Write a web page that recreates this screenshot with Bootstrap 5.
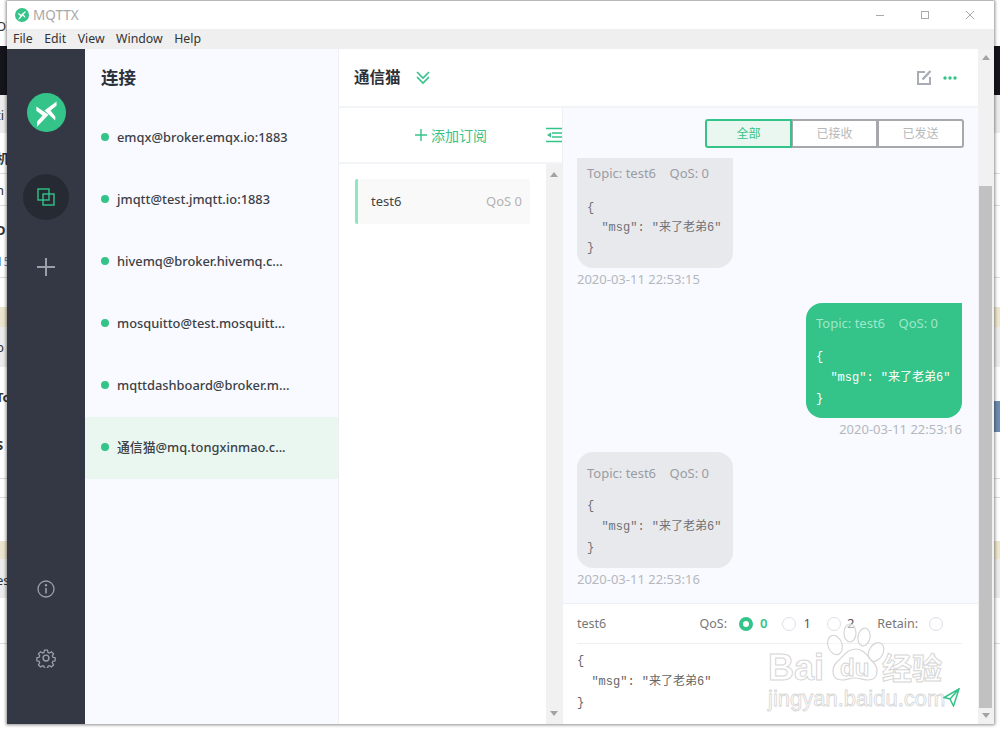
<!doctype html>
<html lang="zh">
<head>
<meta charset="utf-8">
<link href="https://cdn.jsdelivr.net/npm/bootstrap@5.3.0/dist/css/bootstrap.min.css" rel="stylesheet">
<style>
html,body{height:731px;overflow:hidden}
body{background:#fff;font-family:"Noto Sans","Noto Sans CJK SC",sans-serif;position:relative}
.backdrop{position:absolute;inset:0;background:#fff;color:#333;font-size:13px}
.strip{position:absolute;left:0;right:0}
.s-dark{top:46px;height:49px;background:#14141c}
.s-gray{background:#ececec}
.s-tan{background:#ede5cd}
.s-line{height:1px;background:#ddd}
.s-blue{position:absolute;left:994px;right:0;top:401px;height:31px;background:#6c8bae}
.frag{position:absolute;left:-4px;line-height:16px;white-space:nowrap}
.frag b{font-weight:700}
.win{position:absolute;left:7px;top:1px;width:987px;height:723px;background:#fff;box-shadow:0 0 3px 1px rgba(0,0,0,.45);display:flex;flex-direction:column;color:#333}
.titlebar{height:28px;flex:none;color:#a8a8a8;font:13.500px "Noto Sans",sans-serif;padding-left:8px}
.logo-sm{width:14px;height:14px}
.winbtns{gap:35px;padding-right:19px}
.menubar{height:20px;flex:none;background:#efefef;font-size:12.300px;color:#333;padding-left:6px;gap:11.500px;line-height:20px}
.work{flex:1;min-height:0}
.rail{width:78px;flex:none;background:#333844;padding-top:44px}
.rail-active{width:46px;height:46px;border-radius:50%;background:#262a33;margin-top:42px}
.rail-plus{margin-top:38px}
.rail-gear{margin:50px 0 56px}
.conns{width:254px;flex:none;background:#f8faff;border-right:1px solid #eef0f3}
.conns h1{font-size:17.500px;font-weight:700;margin:0;color:#2c3038;padding:18px 0 0 16px;height:58px}
.conn{height:62px;padding-left:16px;font-size:12.850px;font-weight:500;color:#3c3f46;gap:8px}
.conn.on{background:#eaf7f1}
.dot{width:8px;height:8px;border-radius:50%;background:#34c388;flex:none;margin-top:-2px}
.mainp{flex:1;min-width:0}
.mhead{height:59px;flex:none;padding:0 21px 0 15px;border-bottom:2px solid #f3f4f8;background:#fff}
.mhead b{font-size:15.500px;color:#2c3038;font-weight:700}
.chev{margin-left:14px}
.dots3{margin-left:11px}
.mbody{flex:1;min-height:0}
.subs{width:224px;flex:none;border-right:1px solid #eef0f3;background:#fff}
.subhead{height:56px;flex:none;border-bottom:2px solid #f3f4f8;color:#34c388;font-size:14px}
.add{margin-left:76px}
.sublist{flex:1;min-height:0}
.subitems{flex:1;padding:15px 16px 0 16px}
.subitem{height:45px;background:#f9f9f9;border-left:3px solid #8ce8c0;border-radius:2px;padding:1px 8px 0 13px;font-size:13px;color:#444}
.subitem span{color:#b2b2b2}
.vbar{width:16px;flex:none;background:#f1f1f1}
.tri-u,.tri-d{width:0;height:0;border-left:4px solid transparent;border-right:4px solid transparent;margin:0 auto}
.tri-u{border-bottom:5px solid #a3a3a3}
.tri-d{border-top:5px solid #a3a3a3}
.chat{flex:1;min-width:0;background:#f8faff}
.msgs{flex:1;min-height:0;overflow:hidden;padding:11px 14px 0 14px}
.filt{margin-bottom:10px}
.fbtn{width:87px;height:29px;border:2px solid #a6a8ac;background:#fff;font-size:12px;color:#b8b8b8;margin-left:-1px}
.fbtn:first-child{border-radius:3px 0 0 3px;border-color:#34c388;background:#eaf7f1;color:#34c388;position:relative;z-index:1}
.fbtn:last-child{border-radius:0 3px 3px 0}
.bub{width:156px;border-radius:0 0 16px 16px;background:#e8e9ed;padding:6px 10px;color:#9a9ca2;font-size:13px;height:110px}
.msgrow2 .bub{border-radius:16px 0 16px 16px;background:#34c388;color:#9fe8cb;height:115px;padding-top:11px}
.msgrow3 .bub{border-radius:16px;height:116px;padding-top:12px}
.bub .meta{height:20px;line-height:18px;white-space:nowrap}
.bub pre{margin:12px 0 0;font:12px/21px "Liberation Mono","Noto Sans CJK SC",monospace;white-space:pre;color:#6f7176;overflow:visible}
.msgrow1 .bub pre{margin-top:14px;line-height:20px}
.msgrow2 .bub pre{color:#fff;margin-top:13px}
.ts{font-size:13px;color:#b5b7bd;line-height:22px;white-space:nowrap}
.msgrow2{margin-top:13px;margin-right:2px;align-items:flex-end}
.msgrow3{margin-top:12px}
.composer{height:121px;flex:none;background:#fff;border-top:1px solid #eef0f3;padding:0 16px 0 14px}
.chead{height:40px;border-bottom:1px solid #eee;font-size:12.500px;color:#777;padding-top:1px}
.radio-o{width:14px;height:14px;border-radius:50%;border:1px solid #dcdfe6;background:#fff;display:inline-block}
.radio-on{border:4px solid #34c388;width:14px;height:14px;border-radius:50%;background:#fff;display:inline-block}
.qgrp{gap:7px;color:#555;font-size:13px}
.q-on{color:#34c388;margin-left:12px;font-weight:600}
.q-1{margin-left:15px}
.q-2{margin-left:16px;gap:6px}
.q-ret{margin-left:23px}
.q-rad{margin-left:11px;margin-right:19px}
.editor{font:12px/21px "Liberation Mono","Noto Sans CJK SC",monospace;color:#666;margin:0;padding-top:7px;white-space:pre}
.send{position:absolute;left:943px;top:688px}
.wmk{position:absolute;left:760px;top:620px;pointer-events:none}
.wmk text{fill:rgba(255,255,255,.35);stroke:#d6d6d6;stroke-width:1}
.wmk .wa{font:700 36px "Liberation Sans",sans-serif}
.wmk .wd{font:700 24px "Liberation Sans",sans-serif}
.wmk .wc{font:700 30px "Noto Sans CJK SC",sans-serif}
.wmk .wu{font:22px "Liberation Sans",sans-serif;stroke-width:.8}
.page-sb{width:16px;flex:none;background:#f1f1f1;padding-top:6px}
.thumb{background:#c1c1c1;height:522px;margin:126px 2px 0 1px}
.sbd{margin-top:5px}
</style>
</head>
<body>
<div class="backdrop">
  <div class="strip s-dark"></div>
  <div class="strip s-gray" style="top:95px;height:38px"></div>
  <div class="strip s-line" style="top:173px"></div>
  <div class="strip s-line" style="top:205px"></div>
  <div class="strip s-line" style="top:277px"></div>
  <div class="strip s-tan" style="top:307px;height:20px"></div>
  <div class="strip s-gray" style="top:327px;height:40px"></div>
  <div class="strip s-line" style="top:478px"></div>
  <div class="strip s-line" style="top:497px"></div>
  <div class="strip s-tan" style="top:541px;height:18px"></div>
  <div class="strip s-gray" style="top:559px;height:39px"></div>
  <div class="strip s-line" style="top:643px"></div>
  <div class="s-blue"></div>
  <span class="frag" style="top:18px">OI</span>
  <span class="frag" style="top:107px">ti</span>
  <span class="frag" style="top:150px"><b>机</b></span>
  <span class="frag" style="top:182px">n</span>
  <span class="frag" style="top:222px"><b>D</b></span>
  <span class="frag" style="top:253px;color:#5a8fc0">15</span>
  <span class="frag" style="top:339px">b</span>
  <span class="frag" style="top:389px"><b>To</b></span>
  <span class="frag" style="top:437px"><b>S</b></span>
  <span class="frag" style="top:572px">es</span>
</div>
<div class="win">
  <div class="titlebar d-flex align-items-center">
    <svg class="logo-sm me-1" viewBox="0 0 40 40"><circle cx="20" cy="20" r="20" fill="#34c388"/><path d="M30.300 8.600v4.500l-6.200 4.800 4.900 6.200v4.200L17.900 17.900zM9.600 13.800l12.500 8.600-11.800 12.100v-5.200l5.600-6.200-6.300-4.800z" fill="#fff"/></svg>
    <span>MQTTX</span>
    <div class="ms-auto d-flex align-items-center winbtns">
      <svg width="10" height="10" viewBox="0 0 10 10"><path d="M1 5.500h8" stroke="#aaa"/></svg>
      <svg width="10" height="10" viewBox="0 0 10 10"><rect x="1.500" y="1.500" width="7" height="7" fill="none" stroke="#aaa"/></svg>
      <svg width="10" height="10" viewBox="0 0 10 10"><path d="M1 1l8 8M9 1l-8 8" stroke="#aaa"/></svg>
    </div>
  </div>
  <div class="menubar d-flex"><span>File</span><span>Edit</span><span>View</span><span>Window</span><span>Help</span></div>
  <div class="work d-flex">
    <div class="rail d-flex flex-column align-items-center">
      <svg width="39" height="39" viewBox="0 0 40 40"><circle cx="20" cy="20" r="20" fill="#34c388"/><path d="M30.300 8.600v4.500l-6.200 4.800 4.900 6.200v4.200L17.900 17.900zM9.600 13.800l12.500 8.600-11.800 12.100v-5.200l5.600-6.200-6.300-4.800z" fill="#fff"/></svg>
      <div class="rail-active d-flex align-items-center justify-content-center"><svg width="18" height="18" viewBox="0 0 18 18" fill="none" stroke="#34c388" stroke-width="1.400"><rect x="1" y="1" width="11" height="11"/><rect x="6" y="6" width="11" height="11"/></svg></div>
      <svg class="rail-plus" width="18" height="18" viewBox="0 0 18 18"><path d="M9 0v18M0 9h18" stroke="#9aa0a8" stroke-width="2"/></svg>
      <div class="flex-grow-1"></div>
      <svg width="18" height="18" viewBox="0 0 18 18" fill="none" stroke="#9aa0a8" stroke-width="1.300"><circle cx="9" cy="9" r="8"/><path d="M9 8v5.500" stroke-width="1.600"/><circle cx="9" cy="5.200" r=".6"/></svg>
      <svg class="rail-gear" width="20" height="20" viewBox="0 0 24 24" fill="none" stroke="#9aa0a8" stroke-width="1.700"><circle cx="12" cy="12" r="3.500"/><path d="M10 1.500h4l.7 3.100 1.900.8 2.700-1.700 2.800 2.800-1.700 2.700.8 1.900 3 .7v4l-3 .7-.8 1.900 1.700 2.700-2.800 2.800-2.700-1.700-1.900.8-.7 3h-4l-.7-3-1.900-.8-2.700 1.700-2.800-2.800 1.700-2.700-.8-1.900-3-.7v-4l3-.7.8-1.900-1.700-2.700 2.800-2.800 2.700 1.700 1.900-.8z" transform="translate(1.200 1.200) scale(.9)"/></svg>
    </div>
    <div class="conns">
      <h1>连接</h1>
      <div class="conn d-flex align-items-center"><i class="dot"></i><span>emqx@broker.emqx.io:1883</span></div>
      <div class="conn d-flex align-items-center"><i class="dot"></i><span>jmqtt@test.jmqtt.io:1883</span></div>
      <div class="conn d-flex align-items-center"><i class="dot"></i><span>hivemq@broker.hivemq.c...</span></div>
      <div class="conn d-flex align-items-center"><i class="dot"></i><span>mosquitto@test.mosquitt...</span></div>
      <div class="conn d-flex align-items-center"><i class="dot"></i><span>mqttdashboard@broker.m...</span></div>
      <div class="conn on d-flex align-items-center"><i class="dot"></i><span>通信猫@mq.tongxinmao.c...</span></div>
    </div>
    <div class="mainp d-flex flex-column">
      <div class="mhead d-flex align-items-center">
        <b>通信猫</b>
        <svg class="chev" width="16" height="14" viewBox="0 0 16 14" fill="none" stroke="#34c388" stroke-width="1.600"><path d="M2 1l6 6 6-6M2 6l6 6 6-6"/></svg>
        <svg class="ms-auto" width="15" height="15" viewBox="0 0 15 15" fill="none" stroke="#a9adb5" stroke-width="2"><path d="M8 2H1v12h12V7"/><path d="M5.500 9.500 13.500 1" stroke-width="2.400"/></svg>
        <svg class="dots3" width="14" height="6" viewBox="0 0 14 6"><circle cx="2" cy="3" r="1.700" fill="#34c388"/><circle cx="7" cy="3" r="1.700" fill="#34c388"/><circle cx="12" cy="3" r="1.700" fill="#34c388"/></svg>
      </div>
      <div class="mbody d-flex">
        <div class="subs d-flex flex-column">
          <div class="subhead d-flex align-items-center">
            <div class="add d-flex align-items-center gap-1"><svg width="12" height="12" viewBox="0 0 12 12"><path d="M6 0v12M0 6h12" stroke="#34c388" stroke-width="1.400"/></svg><span>添加订阅</span></div>
            <svg class="ms-auto" width="16" height="16" viewBox="0 0 16 16" fill="none" stroke="#34c388" stroke-width="1.600"><path d="M0 1.500h16M6 6h10M6 10h10M0 14.500h16"/><path d="M1 8l4-2.500v5z" fill="#34c388" stroke="none"/></svg>
          </div>
          <div class="sublist d-flex">
            <div class="subitems"><div class="subitem d-flex align-items-center justify-content-between">test6<span>QoS 0</span></div></div>
            <div class="vbar d-flex flex-column justify-content-between py-1"><div class="tri-u mt-1"></div><div class="tri-d mb-1"></div></div>
          </div>
        </div>
        <div class="chat d-flex flex-column">
          <div class="msgs">
            <div class="d-flex justify-content-end filt"><div class="fbtn d-flex align-items-center justify-content-center">全部</div><div class="fbtn d-flex align-items-center justify-content-center">已接收</div><div class="fbtn d-flex align-items-center justify-content-center">已发送</div></div>
            <div class="msgrow1"><div class="bub"><div class="meta">Topic: test6 &nbsp; &nbsp;QoS: 0</div><pre>{
  "msg": "来了老弟6"
}</pre></div><div class="ts">2020-03-11 22:53:15</div></div>
            <div class="msgrow2 d-flex flex-column"><div class="bub"><div class="meta">Topic: test6 &nbsp; &nbsp;QoS: 0</div><pre>{
  "msg": "来了老弟6"
}</pre></div><div class="ts">2020-03-11 22:53:16</div></div>
            <div class="msgrow3"><div class="bub"><div class="meta">Topic: test6 &nbsp; &nbsp;QoS: 0</div><pre>{
  "msg": "来了老弟6"
}</pre></div><div class="ts">2020-03-11 22:53:16</div></div>
          </div>
          <div class="composer">
            <div class="chead d-flex align-items-center">
              <span>test6</span>
              <span class="ms-auto">QoS:</span>
              <span class="qgrp q-on d-flex align-items-center"><i class="radio-on"></i>0</span>
              <span class="qgrp q-1 d-flex align-items-center"><i class="radio-o"></i>1</span>
              <span class="qgrp q-2 d-flex align-items-center"><i class="radio-o"></i>2</span>
              <span class="q-ret">Retain:</span>
              <i class="radio-o q-rad"></i>
            </div>
            <pre class="editor">{
  "msg": "来了老弟6"
}</pre>
          </div>
        </div>
      </div>
    </div>
    <div class="page-sb d-flex flex-column">
      <div class="tri-u"></div>
      <div class="thumb"></div>
      <div class="tri-d sbd"></div>
    </div>
  </div>
</div>
<svg class="wmk" width="200" height="95" viewBox="0 0 200 95">
  <g fill="rgba(255,255,255,.55)" stroke="#d6d6d6" stroke-width="1.200">
    <ellipse cx="75" cy="25" rx="7" ry="10" transform="rotate(-20 75 25)"/>
    <ellipse cx="90" cy="13" rx="6" ry="9"/>
    <ellipse cx="104" cy="17" rx="6" ry="9" transform="rotate(10 104 17)"/>
    <ellipse cx="116" cy="32" rx="7" ry="10" transform="rotate(30 116 32)"/>
    <path d="M96 29c8 0 12 8 17 13 6 6 6 18-5 18-4 0-8-2-13-2s-9 2-13 2c-11 0-11-12-5-18 6-5 10-13 19-13z"/>
  </g>
  <text class="wa" x="8" y="60">Bai</text>
  <text class="wd" x="80" y="56">du</text>
  <text class="wc" x="122" y="59">经验</text>
  <text class="wu" x="8" y="86">jingyan.baidu.com</text>
</svg>
<svg class="send" width="17" height="19" viewBox="0 0 17 19" fill="none" stroke="#34c388" stroke-width="1.500"><path d="M16 1 1 9.500l6 1.500 3.500 7zM16 1 7 11"/></svg>
<script src="https://cdn.jsdelivr.net/npm/bootstrap@5.3.0/dist/js/bootstrap.bundle.min.js"></script>
</body>
</html>
